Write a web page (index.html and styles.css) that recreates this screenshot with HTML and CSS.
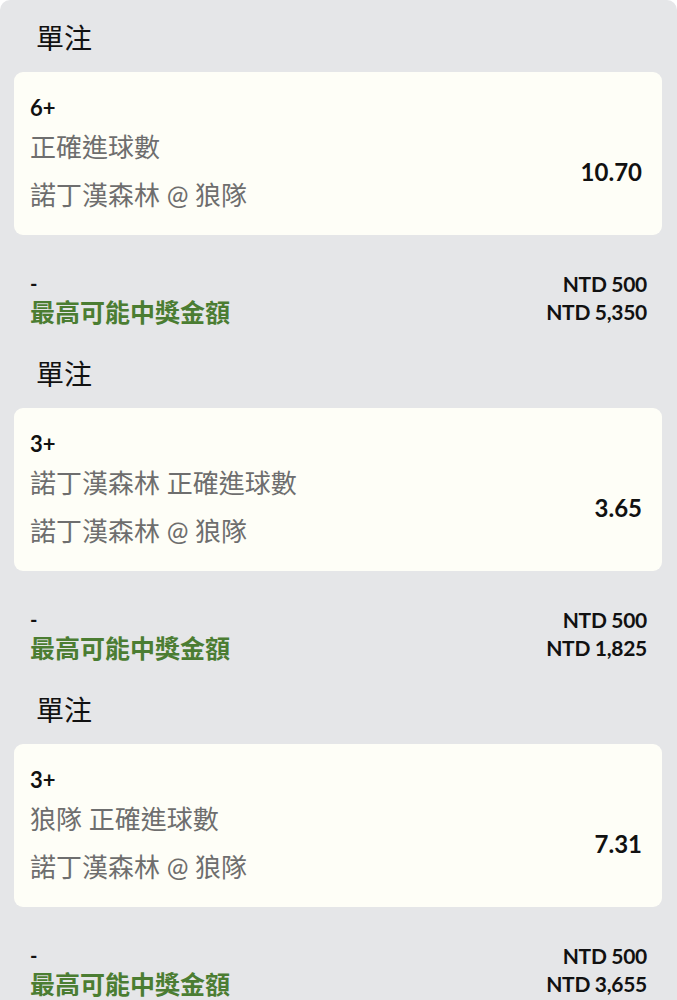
FILE: index.html
```html
<!DOCTYPE html>
<html lang="zh-Hant">
<head>
<meta charset="utf-8">
<title>單注</title>
<link rel="stylesheet" href="styles.css">
</head>
<body>
<main class="panel">
  <section class="bet">
    <h2 class="bet-title">單注</h2>
    <div class="card">
      <div class="selection">6+</div>
      <div class="card-row">
        <div class="details">
          <div class="market">正確進球數</div>
          <div class="event">諾丁漢森林 @ 狼隊</div>
        </div>
        <div class="odds">10.70</div>
      </div>
    </div>
    <div class="summary">
      <div class="summary-row"><span class="dash">-</span><span class="amount">NTD 500</span></div>
      <div class="summary-row"><span class="label">最高可能中獎金額</span><span class="amount">NTD 5,350</span></div>
    </div>
  </section>
  <section class="bet">
    <h2 class="bet-title">單注</h2>
    <div class="card">
      <div class="selection">3+</div>
      <div class="card-row">
        <div class="details">
          <div class="market">諾丁漢森林 正確進球數</div>
          <div class="event">諾丁漢森林 @ 狼隊</div>
        </div>
        <div class="odds">3.65</div>
      </div>
    </div>
    <div class="summary">
      <div class="summary-row"><span class="dash">-</span><span class="amount">NTD 500</span></div>
      <div class="summary-row"><span class="label">最高可能中獎金額</span><span class="amount">NTD 1,825</span></div>
    </div>
  </section>
  <section class="bet">
    <h2 class="bet-title">單注</h2>
    <div class="card">
      <div class="selection">3+</div>
      <div class="card-row">
        <div class="details">
          <div class="market">狼隊 正確進球數</div>
          <div class="event">諾丁漢森林 @ 狼隊</div>
        </div>
        <div class="odds">7.31</div>
      </div>
    </div>
    <div class="summary">
      <div class="summary-row"><span class="dash">-</span><span class="amount">NTD 500</span></div>
      <div class="summary-row"><span class="label">最高可能中獎金額</span><span class="amount">NTD 3,655</span></div>
    </div>
  </section>
</main>
</body>
</html>
```
FILE: styles.css
```css
* { box-sizing: border-box; }
html, body {
  margin: 0;
  padding: 0;
  background: #ffffff;
}
body {
  font-family: "Lato", "Noto Sans CJK TC", sans-serif;
  color: #111111;
}
.panel {
  background: #e5e6e8;
  border-radius: 10px 10px 0 0;
  padding: 18px 0 0;
}
.bet-title {
  margin: 0 0 14px 36px;
  font-size: 28px;
  font-weight: 400;
  line-height: 40px;
  color: #111111;
}
.card {
  margin: 0 15px 0 14px;
  background: #fefef7;
  border-radius: 9px;
  padding: 21px 20px 16px 16px;
}
.selection {
  font-size: 22px;
  font-weight: 700;
  line-height: 30px;
  color: #111111;
}
.card-row {
  display: flex;
  align-items: center;
  justify-content: space-between;
}
.market, .event {
  font-size: 26px;
  line-height: 48px;
  color: #6e6e6e;
}
.odds {
  font-size: 24px;
  font-weight: 700;
  color: #111111;
}
.summary {
  padding: 33px 30px 26px 30px;
}
.summary-row {
  display: flex;
  justify-content: space-between;
  align-items: center;
  height: 30px;
}
.summary-row + .summary-row {
  margin-top: -2px;
  margin-bottom: 2px;
}
.dash {
  font-size: 20px;
  font-weight: 700;
}
.label {
  font-size: 25px;
  font-weight: 700;
  color: #4b7d32;
}
.amount {
  font-size: 21px;
  font-weight: 700;
  color: #111111;
  letter-spacing: -0.3px;
}
```
